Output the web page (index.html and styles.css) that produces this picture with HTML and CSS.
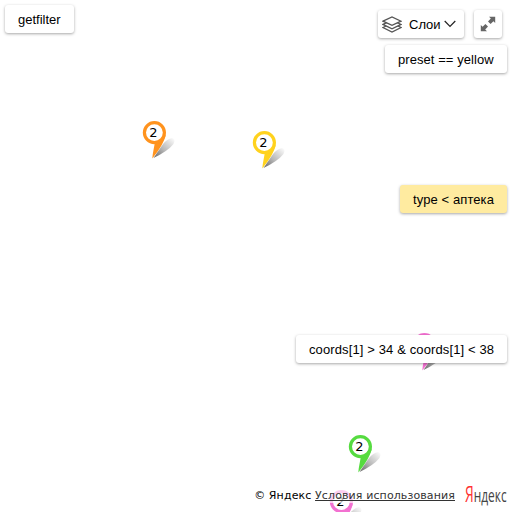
FILE: index.html
```
<!DOCTYPE html>
<html lang="ru">
<head>
<meta charset="utf-8">
<title>getfilter</title>
<link rel="stylesheet" href="styles.css">
</head>
<body>
<svg width="0" height="0" class="defs">
  <defs>
    <linearGradient id="shade" x1="0" y1="1" x2="1" y2="0">
      <stop offset="0" stop-color="#000" stop-opacity=".6"/>
      <stop offset=".45" stop-color="#000" stop-opacity=".28"/>
      <stop offset="1" stop-color="#000" stop-opacity="0"/>
    </linearGradient>
    <symbol id="pin" viewBox="0 0 37 42">
      <path d="M11.500 38L21 24Q25 19 30 18Q34 19 31.500 24Q26 31 11.500 38Z" fill="url(#shade)"/>
      <path d="M23.800 15C22.500 21 18 29 10.300 38.500C10.700 33 12 28 13 22Z" fill="currentColor"/>
      <circle cx="12.400" cy="12.600" r="10" fill="#fff" stroke="currentColor" stroke-width="3.200"/>
    </symbol>
  </defs>
</svg>
<main class="map">
  <div class="pin orange"><svg><use href="#pin"/></svg><span>2</span></div>
  <div class="pin yellow"><svg><use href="#pin"/></svg><span>2</span></div>
  <div class="pin green"><svg><use href="#pin"/></svg><span>2</span></div>
  <div class="pin pink east"><svg><use href="#pin"/></svg></div>
  <div class="pin pink south"><svg><use href="#pin"/></svg><span>2</span></div>

  <div class="controls">
    <header class="toolbar">
      <button class="btn filter">getfilter</button>
      <div class="tools">
        <button class="btn layers">
          <svg class="stack" width="20" height="17" viewBox="0 0 20 17" fill="#fff" stroke="#555" stroke-width="1.300">
            <path d="M1 11.500L10 7.200L19 11.500L10 16Z"/>
            <path d="M1 8.400L10 4.100L19 8.400L10 12.800Z"/>
            <path d="M1 5.200L10 1L19 5.200L10 9.400Z"/>
          </svg>
          <span>Слои</span>
          <svg width="12" height="8" viewBox="0 0 12 8" fill="none" stroke="#222" stroke-width="1.200"><path d="M.7 1L6 6.500L11.300 1"/></svg>
        </button>
        <button class="btn full">
          <svg width="16" height="16" viewBox="0 0 16 16" fill="#666">
            <path d="M9 .8H15.200V7L13.400 5.200L10.600 8L8 5.400L10.800 2.600Z"/>
            <path d="M.8 9V15.200H7L5.200 13.400L8 10.600L5.400 8L2.600 10.800Z"/>
          </svg>
        </button>
      </div>
    </header>
    <button class="btn preset">preset == yellow</button>
    <button class="btn type">type &lt; аптека</button>
    <button class="btn coords">coords[1] &gt; 34 &amp; coords[1] &lt; 38</button>
    <footer class="bottom">
      <div class="copy">© Яндекс <span class="terms">Условия использования</span></div>
      <div class="logo"><span class="logo-text"><b>Я</b>ндекс</span></div>
    </footer>
  </div>
</main>
</body>
</html>
```

FILE: styles.css
```
* { box-sizing: border-box; }
body { margin: 0; background: #fff; }
.defs { position: absolute; }
.map {
  position: relative;
  width: 512px;
  height: 512px;
  overflow: hidden;
  font: 13px/28px "Liberation Sans", Arial, sans-serif;
  color: #000;
}
.pin { position: absolute; width: 37px; height: 42px; }
.pin svg { display: block; width: 37px; height: 42px; }
.pin span {
  position: absolute;
  left: 0;
  top: 4px;
  width: 23px;
  color: #000;
  font: 13px/18px "DejaVu Sans", Verdana, sans-serif;
  text-align: center;
}
.orange { left: 142px; top: 120px; color: #ff931e; }
.yellow { left: 252px; top: 130px; color: #ffd21e; }
.green { left: 348px; top: 434px; color: #56db40; }
.pink { color: #f371d1; }
.east { left: 412px; top: 332px; }
.south { left: 329px; top: 489px; }

.controls {
  position: relative;
  display: flex;
  flex-direction: column;
  align-items: flex-end;
  height: 512px;
  padding: 5px 5px 0;
}
.btn {
  display: flex;
  align-items: center;
  height: 28px;
  margin: 0;
  padding: 1px 13px 0;
  border: 0;
  border-radius: 3px;
  background: #fff;
  box-shadow: 0 1px 3px rgba(0, 0, 0, .35);
  color: #000;
  font: inherit;
  white-space: nowrap;
}
.toolbar {
  display: flex;
  justify-content: space-between;
  align-self: stretch;
  height: 40px;
}
.tools { display: flex; gap: 10px; padding: 5px 5px 0 0; }
.layers { width: 86px; padding: 0 0 0 4px; }
.layers span { margin: 1px 3px 0 7px; }
.full { width: 28px; padding: 0 6px; }
.preset { width: 122px; letter-spacing: .06px; }
.type { width: 107px; margin-top: 112px; background: #ffeba0; letter-spacing: .08px; }
.coords { width: 211px; margin-top: 122px; letter-spacing: .12px; }
.bottom {
  display: flex;
  align-items: flex-start;
  margin-top: 124px;
}
.copy {
  height: 16px;
  padding: 0 3px;
  background: rgba(255, 255, 255, .65);
  font: 11px/18px "DejaVu Sans", Verdana, sans-serif;
  letter-spacing: .11px;
  white-space: nowrap;
}
.terms { color: #333; text-decoration: underline; }
.logo { width: 42px; height: 20px; margin-left: 7px; }
.logo-text {
  display: block;
  width: 80px;
  margin-top: -2px;
  font: 18px/18px "Open Sans", sans-serif;
  color: #444;
  transform: scaleX(.66);
  transform-origin: 0 0;
}
.logo-text b { color: #f33; font-size: 21px; font-weight: 400; }
```
